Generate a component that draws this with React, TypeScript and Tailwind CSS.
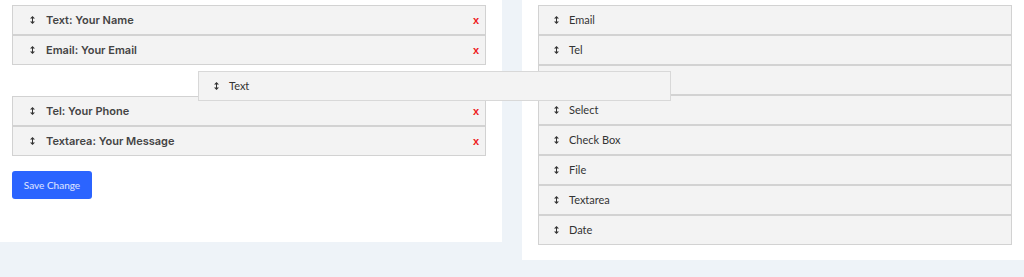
const leftFields = [
  'Text: Your Name',
  'Email: Your Email',
  null,
  'Tel: Your Phone',
  'Textarea: Your Message',
];

const rightFields = ['Email', 'Tel', 'Text', 'Select', 'Check Box', 'File', 'Textarea', 'Date'];

function SortIcon() {
  return (
    <svg width="5" height="8" viewBox="0 0 5 8" className="shrink-0 text-[#333]">
      <path d="M2.5 0 L5 2.6 H0 Z M2.5 8 L5 5.4 H0 Z" fill="currentColor" />
      <rect x="2" y="2" width="1" height="4" fill="currentColor" />
    </svg>
  );
}

function LeftRow({ label }: { label: string }) {
  return (
    <div className="h-[30px] flex items-center border border-[#d2d2d2] bg-[#f3f3f3] pl-[17px] pr-[6px]">
      <SortIcon />
      <span className="ml-[11px] flex-1 text-[11px] font-semibold text-[#444] font-['Inter','Open_Sans',sans-serif]">
        {label}
      </span>
      <span className="text-[11px] font-bold leading-none text-[#ee1c1c] font-['Liberation_Sans',sans-serif]">x</span>
    </div>
  );
}

function RightRow({ label }: { label: string }) {
  return (
    <div className="h-[30px] flex items-center border border-[#d2d2d2] bg-[#f3f3f3] pl-[15px]">
      <SortIcon />
      <span className="ml-[10px] text-[11px] text-[#333] font-['Lato',sans-serif]">{label}</span>
    </div>
  );
}

export default function App() {
  return (
    <div className="relative w-[1024px] h-[277px] bg-[#eef3f8] flex items-start gap-[20px] overflow-hidden">
      <section className="w-[502px] h-[242px] bg-white pl-[12px] pr-[16px] pt-[5px]">
        {leftFields.map((f, i) =>
          f ? <LeftRow key={i} label={f} /> : <div key={i} className="h-[31px]" />
        )}
        <button className="mt-[15px] w-[80px] h-[28px] rounded-[3px] bg-[#2b64ff] text-[10px] text-white/85 font-['Lato',sans-serif]">
          Save Change
        </button>
      </section>

      <section className="flex-1 h-[260px] bg-white pl-[16px] pr-[12px] pt-[5px]">
        {rightFields.map((f) => (
          <RightRow key={f} label={f} />
        ))}
      </section>

      {/* item being dragged from the right list */}
      <div className="absolute left-[198px] top-[71px] w-[473px] h-[30px] flex items-center border border-[#d8d8d8] bg-[#f3f3f3] pl-[15px]">
        <SortIcon />
        <span className="ml-[10px] text-[11px] text-[#333] font-['Lato',sans-serif]">Text</span>
      </div>
    </div>
  );
}
